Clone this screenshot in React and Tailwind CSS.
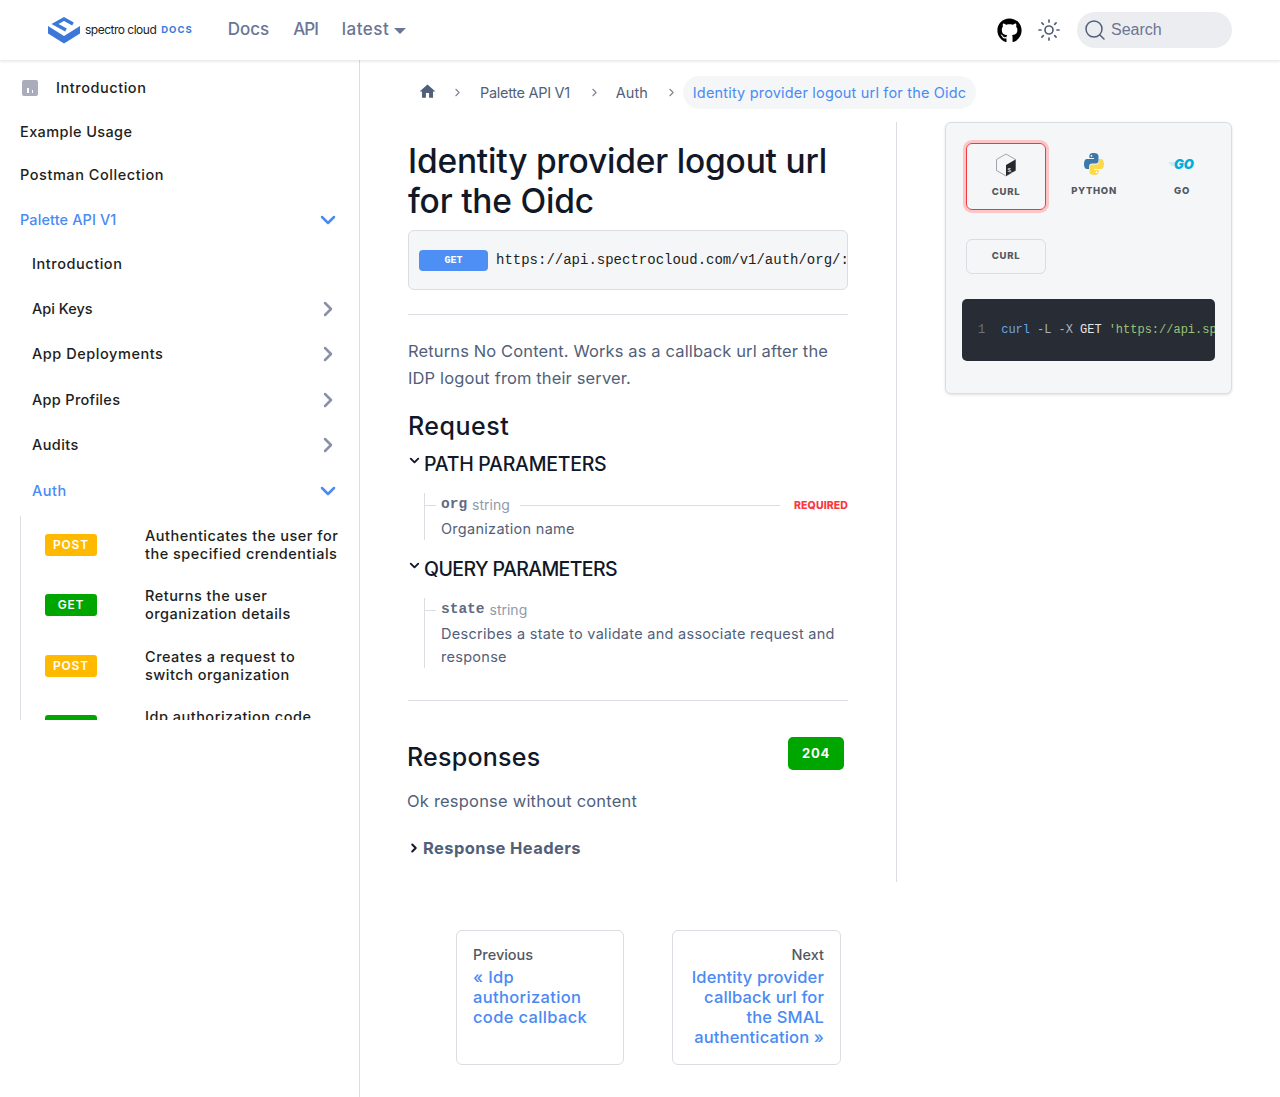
import React from "react";
import { ChevronDown, ChevronRight, Search, Sun } from "lucide-react";
import { FaGithub } from "react-icons/fa";
import { MdHome } from "react-icons/md";

const sans = "font-['Inter',sans-serif]";
const mono = "font-['Liberation_Mono',monospace]";

const Logo = () => (
  <svg width="32" height="28" viewBox="0 0 32 28" fill="none">
    <path d="M25 8 16 3 7 8 18 14" stroke="#3b78d8" strokeWidth="3.4" />
    <path d="M0 10 16 20 32 10V17.500L16 27.500 0 17.500Z" fill="#3b78d8" />
  </svg>
);

const SideItem = ({ label, active, arrow, h = "h-[45px]", track = "tracking-[0.55px]" }) => (
  <div className={`flex items-center justify-between pr-[19px] ${h}`}>
    <span className={`text-[14.5px] font-medium ${track} ${active ? "text-[#4a8af4]" : "text-[#1c1e21]"}`}>{label}</span>
    {arrow === "down" && <ChevronDown size={24} strokeWidth={2.5} className="text-[#4a8af4]" />}
    {arrow === "right" && <ChevronRight size={24} strokeWidth={2.5} className="text-[#8a90a8]" />}
  </div>
);

const ApiLink = ({ method, children }) => (
  <div className="flex gap-[48px] pl-[24px] h-[60.5px] pb-[3px] items-center">
    <span className={`w-[52px] h-[22px] shrink-0 rounded-[3px] flex items-center justify-center text-white text-[12px] font-semibold tracking-[0.8px] ${method === "POST" ? "bg-[#ffba00]" : "bg-[#00a600]"}`}>
      {method}
    </span>
    <span className="text-[14.5px] leading-[18px] font-medium tracking-[0.5px] text-[#1c1e21] whitespace-nowrap">{children}</span>
  </div>
);

const Sidebar = () => (
  <aside className="w-[360px] shrink-0 border-r border-[#dadde1]">
    <nav className="h-[660px] overflow-hidden pl-[20px]">
      <div className="flex items-center gap-[18px] h-[56px]">
        <span className="w-[16px] h-[16px] ml-[2px] rounded-[2px] bg-[#a9adbb] flex items-end justify-center gap-[3px] pb-[3px]">
          <i className="w-[1.5px] h-[5px] bg-white" />
          <i className="w-[1.5px] h-[3px] bg-white" />
        </span>
        <span className="text-[14.5px] font-medium tracking-[0.55px] text-[#1c1e21]">Introduction</span>
      </div>
      <SideItem label="Example Usage" h="h-[32px]" track="tracking-[0.4px]" />
      <SideItem label="Postman Collection" h="h-[54px]" />
      <SideItem label="Palette API V1" active arrow="down" h="h-[35px]" track="tracking-[0.1px]" />
      <div className="pl-[12px]">
        <SideItem label="Introduction" h="h-[53px]" />
        <SideItem label="Api Keys" arrow="right" h="h-[37px]" track="tracking-[0px]" />
        <SideItem label="App Deployments" arrow="right" h="h-[53px]" />
        <SideItem label="App Profiles" arrow="right" h="h-[39px]" track="tracking-[0.3px]" />
        <SideItem label="Audits" arrow="right" h="h-[52px]" track="tracking-[0.4px]" />
        <SideItem label="Auth" active arrow="down" h="h-[39px]" />
      </div>
      <div className="border-l border-[#dadde1] mt-[6px] h-[204px] overflow-hidden">
        <ApiLink method="POST">Authenticates the user for<br />the specified crendentials</ApiLink>
        <ApiLink method="GET">Returns the user<br />organization details</ApiLink>
        <ApiLink method="POST">Creates a request to<br />switch organization</ApiLink>
        <ApiLink method="GET">Idp authorization code<br />callback</ApiLink>
      </div>
    </nav>
  </aside>
);

const Param = ({ name, desc, required }) => (
  <div className="relative ml-[16px] border-l border-[#dadde1] pl-[16px]">
    <span className="absolute left-0 top-[12px] w-[11px] h-px bg-[#dadde1]" />
    <div className="flex items-center h-[24px]">
      <span className={`${mono} text-[14.5px] font-bold text-[#5f6b85]`}>{name}</span>
      <span className="ml-[5px] -mt-[2px] text-[14px] text-[#9099ab]">string</span>
      {required && (
        <>
          <span className="ml-[10px] flex-1 h-px bg-[#dadde1]" />
          <span className="ml-[14px] mt-px text-[10.5px] font-extrabold tracking-[0.1px] text-[#fa383e]">REQUIRED</span>
        </>
      )}
    </div>
    <p className="text-[14.5px] leading-[23px] tracking-[0.28px] text-[#525f7a]">{desc}</p>
  </div>
);

const ParamHead = ({ children, track }) => (
  <div className="flex items-center h-[30px] pt-[2px]">
    <ChevronDown size={15} strokeWidth={3} className="-mt-[10px] -ml-[1px] text-[#111827] mr-[2px]" />
    <h3 className={`text-[19.5px] font-medium text-[#111827] ${track}`}>{children}</h3>
  </div>
);

const Tab = ({ label, active, icon }) => (
  <div className={`w-[80px] h-[67px] rounded-[6px] flex flex-col items-center justify-start pt-[8px] ${active ? "border border-[#f0383e] ring-[3px] ring-[#fcc6c8]" : ""}`}>
    <span className="h-[26px] flex items-center">{icon}</span>
    <span className="mt-[7px] text-[9.5px] font-extrabold tracking-[0.7px] text-[#525860]">{label}</span>
  </div>
);

const BashIcon = () => (
  <svg width="22" height="24" viewBox="0 0 22 24">
    <path d="M11 1 20.500 6.500V17.500L11 23 1.500 17.500V6.500Z" fill="#f5f6f7" stroke="#8b8f94" strokeWidth="0.8" />
    <path d="M20.500 6.500V17.500L11 23V12Z" fill="#25292e" />
    <text x="12.400" y="19" fontSize="6" fill="#fff" fontFamily="Liberation Mono">$_</text>
  </svg>
);

const PythonIcon = () => (
  <svg width="20" height="22" viewBox="0 0 20 22">
    <path d="M9.800 0C6 0 5.400 1.500 5.400 3V5H10V6H3C1 6 0 8 0 11s1 5 3 5h2V13.500C5 11.500 6.500 10.500 8 10.500h4c1.500 0 2.500-1 2.500-2.500V3C14.500 1 12.500 0 9.800 0Z" fill="#3c78aa" />
    <path d="M10.200 22c3.800 0 4.400-1.500 4.400-3V17H10V16h7c2 0 3-2 3-5s-1-5-3-5h-2v2.500c0 2-1.500 3-3 3H8c-1.500 0-2.500 1-2.500 2.500v5c0 2 2 3 4.700 3Z" fill="#fdd94d" />
    <circle cx="7.500" cy="2.800" r="0.900" fill="#fff" />
    <circle cx="12.500" cy="19.200" r="0.900" fill="#fff" />
  </svg>
);

const GoIcon = () => (
  <svg width="26" height="12" viewBox="0 0 26 12" fill="none">
    <path d="M0 5h6M1.500 7h5" stroke="#a8e3f0" strokeWidth="1.200" />
    <text x="5" y="11" fontSize="13" fontWeight="900" fontStyle="italic" fill="#00add8" fontFamily="Inter">GO</text>
  </svg>
);

const PageCard = ({ align, width, track, small, children }) => (
  <div className={`${width} h-[135px] border border-[#dadde1] rounded-[6px] px-[16px] pt-[15px] ${align}`}>
    <div className="text-[14.5px] leading-[18px] font-medium text-[#525860]">{small}</div>
    <div className={`text-[16.5px] leading-[20px] font-medium text-[#4a8af4] mt-[3px] ${track}`}>{children}</div>
  </div>
);

export default function App() {
  return (
    <div className={`${sans} min-h-[1097px] bg-white`}>
      <header className="relative h-[60px] flex items-center px-[48px] bg-white shadow-[0_2px_2px_rgba(0,0,0,0.08)]">
        <Logo />
        <span className="ml-[5px] text-[12px] text-[#222] tracking-[-0.5px]">spectro cloud</span>
        <span className="ml-[5px] text-[9.5px] font-bold tracking-[1px] text-[#3b78d8]">DOCS</span>
        <div className="ml-[35px] flex items-center gap-[24px] text-[17px] font-medium text-[#6b7594]">
          <span>Docs</span>
          <span className="tracking-[-1px]">API</span>
          <span className="flex items-center gap-[5px] tracking-[0.5px]">
            latest
            <i className="w-0 h-0 border-x-[6px] border-x-transparent border-t-[6px] border-t-[#6b7594] mt-[2px]" />
          </span>
        </div>
        <div className="ml-auto flex items-center">
          <FaGithub size={25} className="text-black" />
          <Sun size={24} strokeWidth={1.7} className="ml-[15px] text-[#525f7a]" />
          <div className="ml-[16px] w-[155px] h-[36px] rounded-full bg-[#ebedf0] flex items-center pl-[6px]">
            <Search size={24} strokeWidth={1.5} className="text-[#525f7a]" />
            <span className="ml-[4px] font-['Liberation_Sans',sans-serif] text-[16px] text-[#6b7594]">Search</span>
          </div>
        </div>
      </header>

      <div className="flex h-[1037px]">
        <Sidebar />
        <main className="flex-1 px-[48px]">
          <div className="flex items-center h-[62px] pt-[3px] text-[14.5px] text-[#525f7a]">
            <MdHome size={19} className="ml-[10px] -mt-[3px] text-[#525f7a]" />
            <ChevronRight size={13} className="ml-[14px] text-[#7c8493]" />
            <span className="ml-[16px] tracking-[-0.3px]">Palette API V1</span>
            <ChevronRight size={13} className="ml-[18px] text-[#7c8493]" />
            <span className="ml-[15px]">Auth</span>
            <ChevronRight size={13} className="ml-[17px] text-[#7c8493]" />
            <span className="ml-[5px] px-[10px] h-[33px] flex items-center rounded-full bg-[#f5f6f7] tracking-[0.18px] text-[#4a8af4]">Identity provider logout url for the Oidc</span>
          </div>

          <div className="flex">
            <div className="w-[489px] h-[760px] shrink-0 border-r border-[#dadde1]">
              <div className="w-[440px]">
                <h1 className="pt-[19px] text-[33.5px] leading-[40px] font-medium tracking-[-0.2px] text-[#111827]">Identity provider logout url for the Oidc</h1>
                <div className="mt-[9px] h-[60px] border border-[#dadde1] rounded-[6px] bg-[#f5f6f7] flex items-center pl-[10px] overflow-hidden">
                  <span className={`${mono} w-[69px] h-[21px] shrink-0 rounded-[4px] bg-[#4d8ff5] text-white text-[10px] font-bold flex items-center justify-center`}>GET</span>
                  <span className={`${mono} ml-[8px] text-[14px] whitespace-nowrap text-[#1c1e21]`}>https://api.spectrocloud.com/v1/auth/org/:org/oidc/logout</span>
                </div>
                <div className="mt-[24px] h-px bg-[#dadde1]" />
                <p className="mt-[23px] text-[16.5px] leading-[27px] tracking-[0.13px] text-[#525f7a]">Returns No Content. Works as a callback url after the IDP logout from their server.</p>
                <h2 className="mt-[17px] text-[25px] leading-[34px] font-medium tracking-[0.5px] text-[#111827]">Request</h2>
                <div className="mt-[6px]"><ParamHead track="tracking-[-0.25px]">PATH PARAMETERS</ParamHead></div>
                <div className="mt-[14px]"><Param name="org" desc="Organization name" required /></div>
                <div className="mt-[14px]"><ParamHead track="tracking-[-0.6px]">QUERY PARAMETERS</ParamHead></div>
                <div className="mt-[14px]"><Param name="state" desc="Describes a state to validate and associate request and response" /></div>
                <div className="mt-[32px] h-px bg-[#dadde1]" />
                <div className="mt-[36px] flex items-start justify-between pr-[4px] -ml-px">
                  <h2 className="mt-[3px] text-[25px] leading-[34px] font-medium tracking-[0.25px] text-[#111827]">Responses</h2>
                  <span className="w-[56px] h-[33px] rounded-[5px] bg-[#00a600] text-white text-[13px] font-bold tracking-[0.8px] flex items-center justify-center">204</span>
                </div>
                <p className="-ml-px mt-[14px] text-[16.5px] leading-[27px] tracking-[0.2px] text-[#525f7a]">Ok response without content</p>
                <div className="mt-[21px] flex items-center">
                  <ChevronRight size={14} strokeWidth={3.5} className="-ml-px text-[#111827] mr-[2px]" />
                  <span className="text-[16.5px] font-bold tracking-[0.4px] text-[#525f7a]">Response Headers</span>
                </div>
              </div>
            </div>

            <div className="ml-[48px] w-[287px] h-[272px] rounded-[6px] border border-[#dadde1] bg-[#f5f6f7] shadow-[0_1px_3px_rgba(0,0,0,0.12)] px-[16px] pt-[20px]">
              <div className="flex pl-[4px] gap-[8px] w-[276px]">
                <Tab label="CURL" active icon={<BashIcon />} />
                <Tab label="PYTHON" icon={<PythonIcon />} />
                <Tab label="GO" icon={<GoIcon />} />
              </div>
              <div className="mt-[29px] ml-[4px] w-[80px] h-[35px] rounded-[6px] border border-[#dadde1] text-[9.5px] font-extrabold tracking-[0.7px] text-[#525860] flex items-center justify-center">CURL</div>
              <div className={`${mono} mt-[25px] w-[253px] h-[62px] rounded-[5px] bg-[#282c34] flex items-center pl-[16px] text-[12px] whitespace-nowrap overflow-hidden`}>
                <span className="text-[#6b7280]">1</span>
                <span className="ml-[16px] text-[#6ca6e8]">curl</span>
                <span className="ml-[7px] text-[#abb2bf]">-L -X</span>
                <span className="ml-[7px] text-[#e6e6e6]">GET</span>
                <span className="ml-[7px] text-[#98c379]">'https://api.spectrocloud.com/v1/auth/org/:org/oidc/logout'</span>
              </div>
            </div>
          </div>

          <div className="flex pl-[48px] gap-[48px] mt-[48px]">
            <PageCard small="Previous" width="w-[168px]" track="tracking-[0.35px]" align="text-left">« Idp authorization code callback</PageCard>
            <PageCard small="Next" width="w-[169px]" track="tracking-[0.15px]" align="text-right">Identity provider callback url for the SMAL authentication »</PageCard>
          </div>
        </main>
      </div>
    </div>
  );
}
